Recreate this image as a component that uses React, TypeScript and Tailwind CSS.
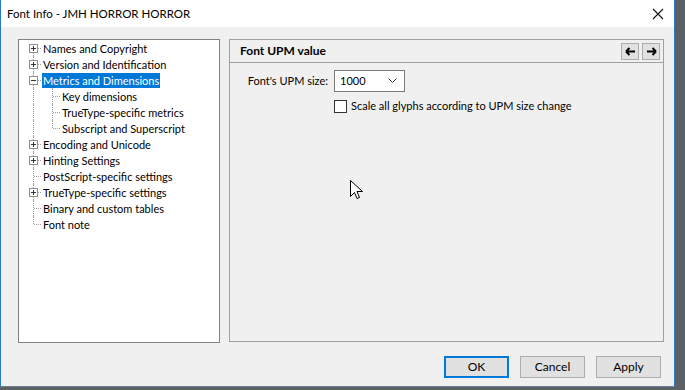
import { ReactNode } from "react";

const font = { fontFamily: 'Lato, "Noto Sans", "Liberation Sans", sans-serif' };

type Node = { label: string; kind: "plus" | "minus" | "leaf"; selected?: boolean; children?: string[] };

const tree: Node[] = [
  { label: "Names and Copyright", kind: "plus" },
  { label: "Version and Identification", kind: "plus" },
  {
    label: "Metrics and Dimensions",
    kind: "minus",
    selected: true,
    children: ["Key dimensions", "TrueType-specific metrics", "Subscript and Superscript"],
  },
  { label: "Encoding and Unicode", kind: "plus" },
  { label: "Hinting Settings", kind: "plus" },
  { label: "PostScript-specific settings", kind: "leaf" },
  { label: "TrueType-specific settings", kind: "plus" },
  { label: "Binary and custom tables", kind: "leaf" },
  { label: "Font note", kind: "leaf" },
];

const dotV = "border-l border-dotted border-[#a0a0a0]";
const dotH = "border-t border-dotted border-[#a0a0a0]";

const ExpandBox = ({ minus }: { minus?: boolean }) => (
  <div className="absolute left-[10px] top-[4px] w-[9px] h-[9px] border border-[#919191] bg-white flex items-center justify-center">
    <div className="relative w-[5px] h-[5px]">
      <div className="absolute left-0 top-[2px] w-[5px] h-px bg-[#333]" />
      {!minus && <div className="absolute left-[2px] top-0 w-px h-[5px] bg-[#333]" />}
    </div>
  </div>
);

const Row = ({ gutter, children }: { gutter: ReactNode; children: ReactNode }) => (
  <div className="flex h-[16px] items-center">
    {gutter}
    {children}
  </div>
);

const TopGutter = ({ first, last, kind }: { first: boolean; last: boolean; kind: Node["kind"] }) => (
  <div className="relative w-[23px] h-[16px] shrink-0">
    <div className={`absolute left-[14px] ${dotV} ${first ? "top-[8px]" : "top-0"} ${last ? "h-[8px]" : "bottom-0"}`} />
    <div className={`absolute left-[15px] top-[8px] w-[7px] ${dotH}`} />
    {kind !== "leaf" && <ExpandBox minus={kind === "minus"} />}
  </div>
);

const ChildGutter = ({ last }: { last: boolean }) => (
  <div className="relative w-[42px] h-[16px] shrink-0">
    <div className={`absolute left-[14px] top-0 bottom-0 ${dotV}`} />
    <div className={`absolute left-[33px] top-0 ${dotV} ${last ? "h-[8px]" : "bottom-0"}`} />
    <div className={`absolute left-[34px] top-[8px] w-[7px] ${dotH}`} />
  </div>
);

const Tree = () => (
  <div className="w-[202px] h-[304px] border border-[#828282] bg-white text-[11px] text-black leading-none">
    {tree.map((n, i) => (
      <div key={n.label}>
        <Row gutter={<TopGutter first={i === 0} last={i === tree.length - 1} kind={n.kind} />}>
          <span className={`px-[1px] py-[2px] whitespace-nowrap ${n.selected ? "bg-[#0078d7] text-white" : ""}`}>
            {n.label}
          </span>
        </Row>
        {n.children?.map((c, j) => (
          <Row key={c} gutter={<ChildGutter last={j === n.children!.length - 1} />}>
            <span className="px-[1px] whitespace-nowrap">{c}</span>
          </Row>
        ))}
      </div>
    ))}
  </div>
);

const ArrowBtn = ({ dir }: { dir: "l" | "r" }) => (
  <div className="w-[18px] h-[17px] border border-[#adadad] bg-[#e1e1e1] flex items-center justify-center">
    <svg width="11" height="9" viewBox="0 0 11 9">
      {dir === "l" ? (
        <path d="M1 4.5H10M1 4.5L4.5 1M1 4.5L4.5 8" stroke="#000" strokeWidth="2" fill="none" />
      ) : (
        <path d="M10 4.5H1M10 4.5L6.5 1M10 4.5L6.5 8" stroke="#000" strokeWidth="2" fill="none" />
      )}
    </svg>
  </div>
);

const Button = ({ label, primary }: { label: string; primary?: boolean }) => (
  <div
    className={`w-[65px] h-[22px] flex items-center justify-center text-[12px] bg-[#e1e1e1] ${
      primary ? "border-2 border-[#0078d7]" : "border border-[#adadad]"
    }`}
  >
    {label}
  </div>
);

export default function App() {
  return (
    <div className="w-[685px] h-[390px] bg-[#5d6063] overflow-hidden" style={font}>
      <div className="w-[675px] h-[387px] flex flex-col bg-[#f0f0f0] border-l border-r border-[#2b79c2] border-b border-b-[#6d7f92]">
        <div className="h-[27px] bg-white flex items-center justify-between pl-[6px] pr-[10px] shrink-0">
          <span className="text-[11.5px] text-black">Font Info - JMH HORROR HORROR</span>
          <svg width="12" height="12" viewBox="0 0 12 12">
            <path d="M1 1L11 11M11 1L1 11" stroke="#111" strokeWidth="1.1" />
          </svg>
        </div>
        <div className="flex gap-[9px] pl-[17px] pt-[12px]">
          <Tree />
          <div className="w-[435px] h-[303px] border border-[#a0a0a0] flex flex-col">
            <div className="h-[23px] border-b border-[#a0a0a0] flex items-center justify-between pl-[10px] pr-[3px] shrink-0">
              <span className="text-[12px] font-bold text-black">Font UPM value</span>
              <div className="flex gap-[3px]">
                <ArrowBtn dir="l" />
                <ArrowBtn dir="r" />
              </div>
            </div>
            <div className="relative flex-1 text-[11px] text-black">
              <div className="flex items-center mt-[7px]">
                <span className="w-[104px] text-right pr-[6px]">Font's UPM size:</span>
                <div className="w-[71px] h-[22px] border border-[#7a7a7a] bg-white flex items-center justify-between pl-[5px] pr-[7px]">
                  <span>1000</span>
                  <svg width="9" height="6" viewBox="0 0 9 6">
                    <path d="M0.5 0.5L4.5 4.5L8.5 0.5" stroke="#333" fill="none" />
                  </svg>
                </div>
              </div>
              <div className="flex items-center gap-[4px] mt-[6px] ml-[104px]">
                <div className="w-[13px] h-[13px] border border-[#333] bg-white" />
                <span>Scale all glyphs according to UPM size change</span>
              </div>
              <svg className="absolute left-[120px] top-[117px]" width="13" height="20" viewBox="0 0 13 20">
                <path d="M0.5 0.5V16.5L4.5 12.5L7 18.5L9.5 17.5L7 11.5H12.5Z" fill="#fff" stroke="#000" strokeWidth="1" />
              </svg>
            </div>
          </div>
        </div>
        <div className="flex justify-end gap-[11px] pr-[13px] mt-[13px]">
          <Button label="OK" primary />
          <Button label="Cancel" />
          <Button label="Apply" />
        </div>
      </div>
    </div>
  );
}
